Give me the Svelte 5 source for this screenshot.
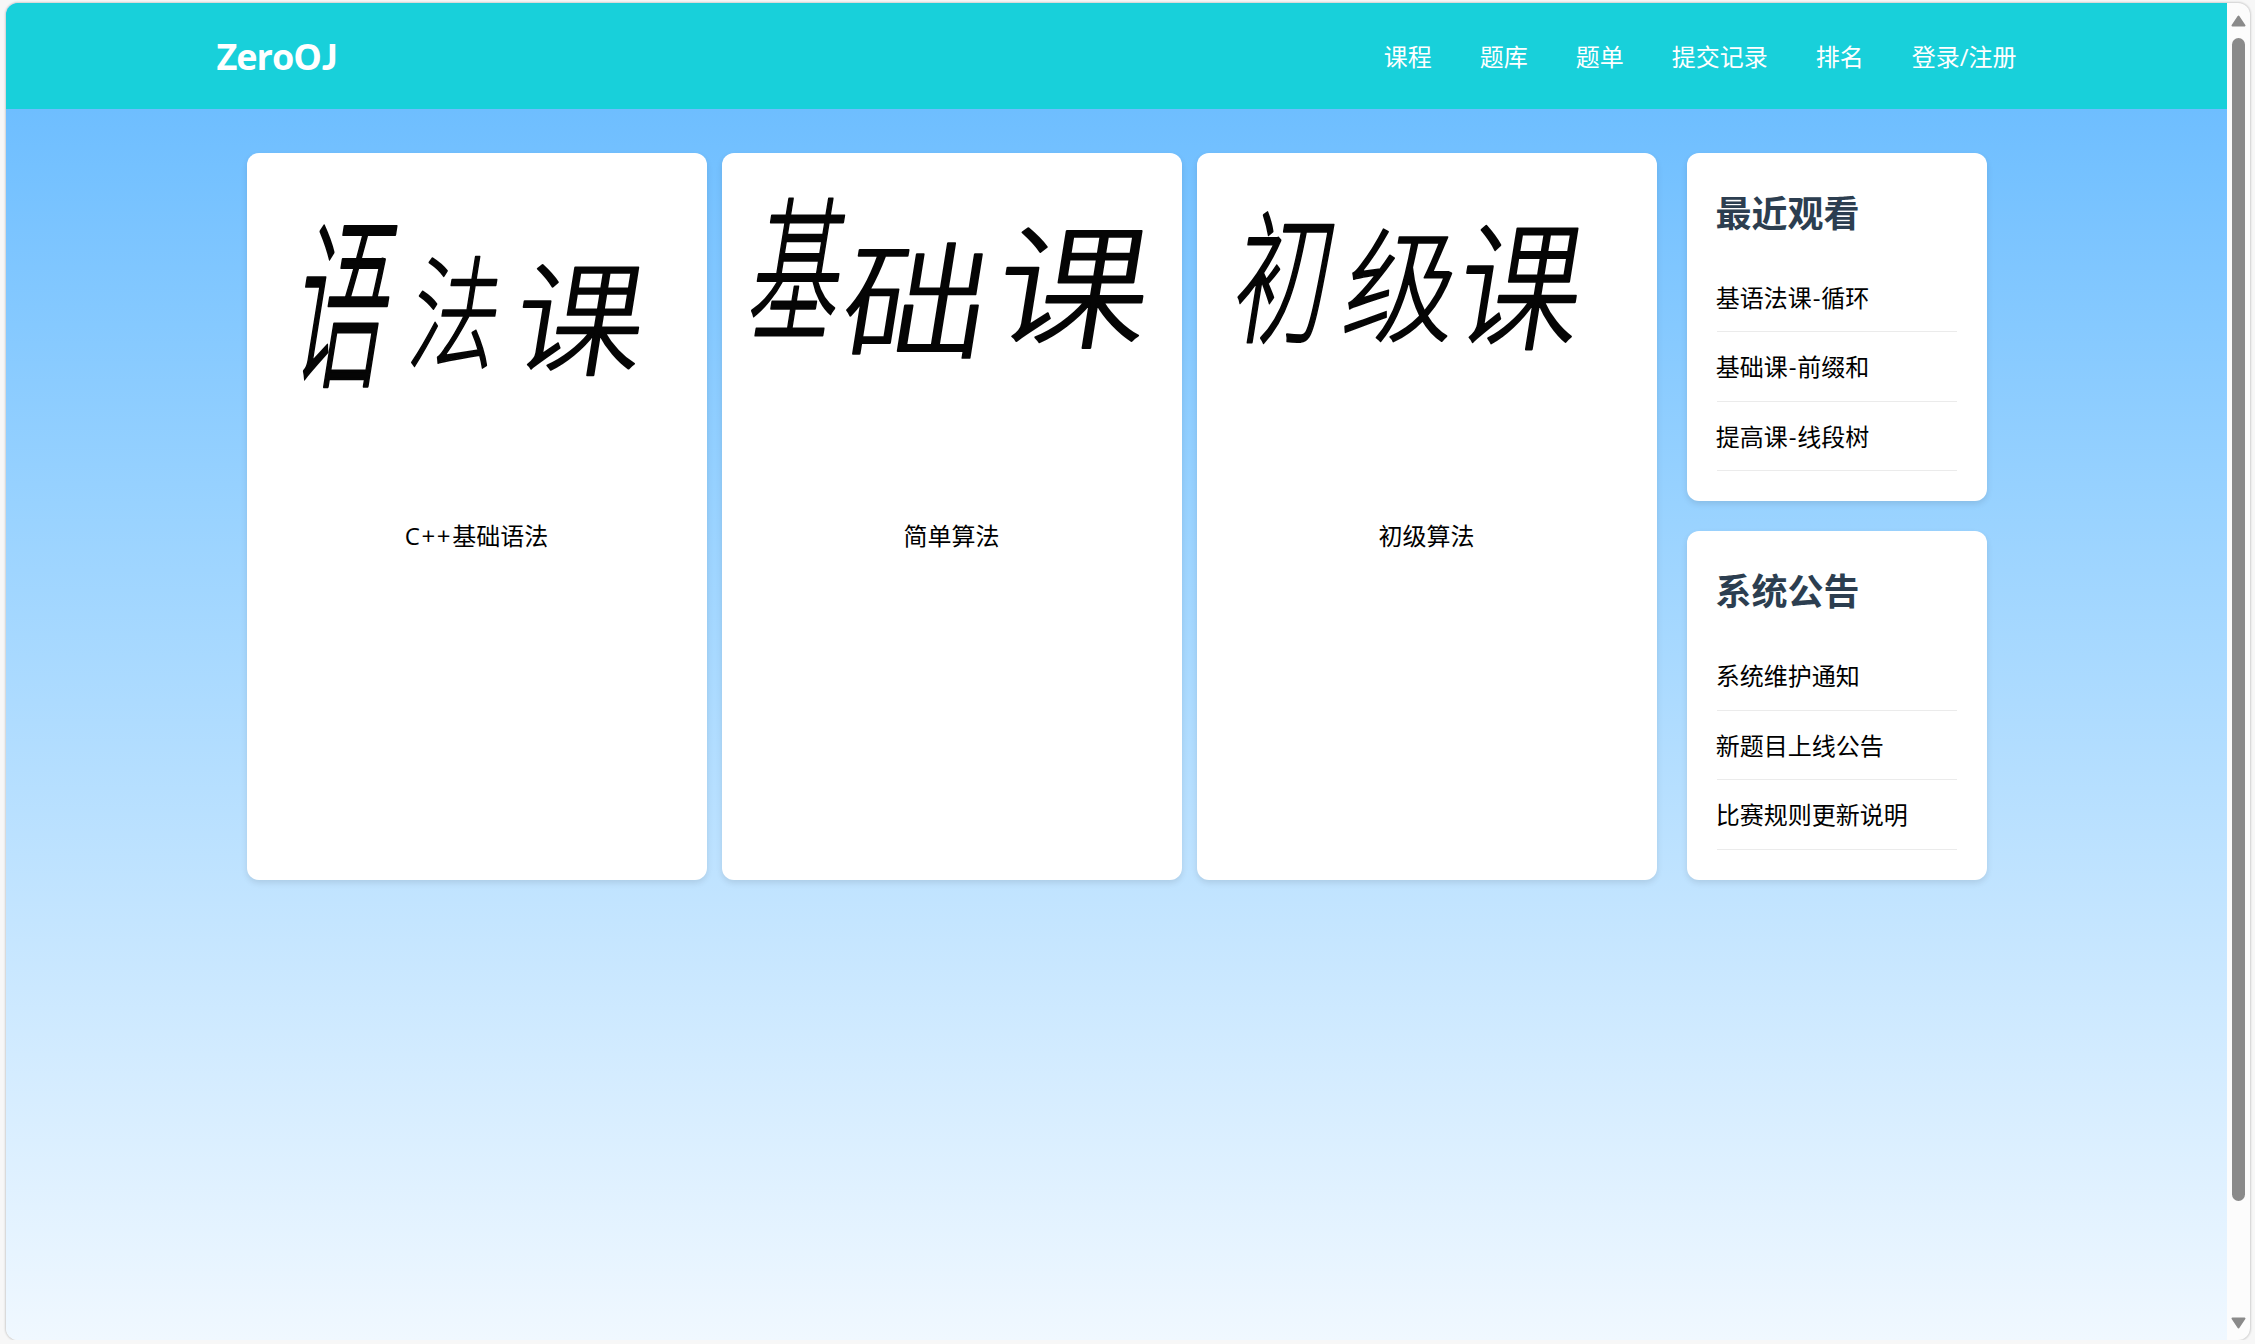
<script>
  const nav = ['课程', '题库', '题单', '提交记录', '排名', '登录/注册'];

  // Each title character has its own box on the cover: x, y, width, height.
  const courses = [
    {
      latin: 'C++',
      name: '基础语法',
      title: [
        ['语', 42, 65, 112, 170],
        ['法', 161, 103, 98, 113],
        ['课', 266, 109, 136, 115]
      ]
    },
    {
      latin: '',
      name: '简单算法',
      title: [
        ['基', 25, 45, 104, 143],
        ['础', 119, 89, 151, 119],
        ['课', 273, 71, 159, 125]
      ]
    },
    {
      latin: '',
      name: '初级算法',
      title: [
        ['初', 34, 58, 108, 133],
        ['级', 146, 75, 120, 114],
        ['课', 258, 69, 133, 129]
      ]
    }
  ];

  const panels = [
    { title: '最近观看', items: ['基语法课-循环', '基础课-前缀和', '提高课-线段树'] },
    { title: '系统公告', items: ['系统维护通知', '新题目上线公告', '比赛规则更新说明'] }
  ];

  // Slants a 100px glyph and fits it into its box.
  function fit(x, y, w, h) {
    const slant = 0.16;
    const a = (w - slant * h) / 90;
    const d = h / 92;
    const c = -slant * d;
    return `matrix(${a} 0 ${c} ${d} ${x - 5 * a - 8 * c} ${y + h - 8 * d})`;
  }
</script>

<div class="window">
  <div class="page">
    <header>
      <div class="bar">
        <div class="logo">ZeroO<span class="j">J</span></div>
        <nav>
          {#each nav as item}<a href="#top">{item}</a>{/each}
        </nav>
      </div>
    </header>
    <main>
      <section class="courses">
        {#each courses as course}
          <article class="card">
            <svg class="cover" viewBox="0 0 460 365">
              {#each course.title as [char, x, y, w, h]}
                <text transform={fit(x, y, w, h)}>{char}</text>
              {/each}
            </svg>
            <p>{#if course.latin}<span class="latin">{course.latin}</span>{/if}{course.name}</p>
          </article>
        {/each}
      </section>
      <aside>
        {#each panels as panel}
          <section class="card panel">
            <h2>{panel.title}</h2>
            <ul>
              {#each panel.items as item}
                <li>{#each item.split('-') as part, i}{#if i}<span class="dash">-</span>{/if}{part}{/each}</li>
              {/each}
            </ul>
          </section>
        {/each}
      </aside>
    </main>
  </div>
  <div class="scrollbar">
    <svg width="15" height="12" viewBox="0 0 15 12"><path d="M7.5 1.5 13.5 10.5H1.5Z" /></svg>
    <div class="track"><div class="thumb"></div></div>
    <svg width="15" height="12" viewBox="0 0 15 12"><path d="M7.5 10.5 13.5 1.5H1.5Z" /></svg>
  </div>
</div>

<style>
  :global(body) {
    background: #f7f7f7;
    overflow: hidden;
  }
  .window {
    box-sizing: border-box;
    display: flex;
    width: 2244px;
    height: 1337px;
    margin: 3px 0 0 6px;
    border-radius: 12px;
    overflow: hidden;
    background: #fcfcfc;
    box-shadow: 0 0 2px 1px rgba(0, 0, 0, 0.16);
    font-family: 'Open Sans', 'Noto Sans CJK SC', sans-serif;
    font-size: 24px;
    line-height: 38.4px;
    color: #000;
  }
  .page {
    width: 2221px;
    background: linear-gradient(180deg, #6ebeff 106px, #98d2ff 500px, #f0f8ff 100%);
  }
  header {
    height: 106px;
    background: #18d0da;
  }
  .bar {
    box-sizing: border-box;
    display: flex;
    align-items: center;
    justify-content: space-between;
    width: 1800px;
    height: 106px;
    margin: 0 auto;
    padding-top: 3px;
    color: #fff;
  }
  .logo {
    padding-bottom: 1px;
    font-size: 36px;
    font-weight: 700;
    letter-spacing: -1px;
  }
  .j {
    margin-left: 1px;
    font-family: Lato, sans-serif;
    font-weight: 900;
  }
  nav {
    display: flex;
    gap: 48px;
  }
  nav a {
    color: #fff;
    text-decoration: none;
  }
  main {
    display: flex;
    gap: 30px;
    width: 1740px;
    margin: 0 auto;
    padding-top: 44px;
  }
  .courses {
    display: flex;
    gap: 15px;
  }
  .card {
    background: #fff;
    border-radius: 12px;
    box-shadow: 0 3px 6px rgba(0, 0, 0, 0.1);
  }
  .courses .card {
    width: 460px;
  }
  .cover {
    display: block;
    width: 460px;
    height: 364px;
    overflow: visible;
  }
  .cover text {
    font-family: 'Noto Sans CJK SC', sans-serif;
    font-size: 100px;
    font-weight: 300;
    fill: #050505;
    stroke: #050505;
    stroke-width: 1.5px;
    stroke-linejoin: round;
  }
  .card p {
    margin: 0;
    text-align: center;
  }
  .latin {
    letter-spacing: 1.6px;
  }
  .dash {
    padding: 0 0.9px;
  }
  aside {
    display: flex;
    flex-direction: column;
    gap: 30px;
  }
  .panel {
    box-sizing: border-box;
    width: 300px;
    height: 348.4px;
    padding: 30px;
  }
  h2 {
    margin: 0 0 20.9px -1px;
    padding-top: 1.5px;
    font-size: 36px;
    font-weight: 700;
    line-height: 57.6px;
    color: #2c3e50;
  }
  ul {
    margin: 0;
    padding: 0;
    list-style: none;
  }
  li {
    padding: 16px 0 14px;
    border-bottom: 1px solid #ebebeb;
    text-indent: -0.7px;
  }
  .scrollbar {
    display: flex;
    flex-direction: column;
    align-items: center;
    justify-content: space-between;
    box-sizing: border-box;
    width: 23px;
    padding: 12px 0 11px;
  }
  .scrollbar path {
    fill: #8a8a8a;
    stroke: #8a8a8a;
    stroke-width: 2px;
    stroke-linejoin: round;
  }
  .track {
    flex: 1;
    padding-top: 11px;
  }
  .thumb {
    width: 13px;
    height: 1163px;
    border-radius: 7px;
    background: #8a8a8a;
  }
</style>
